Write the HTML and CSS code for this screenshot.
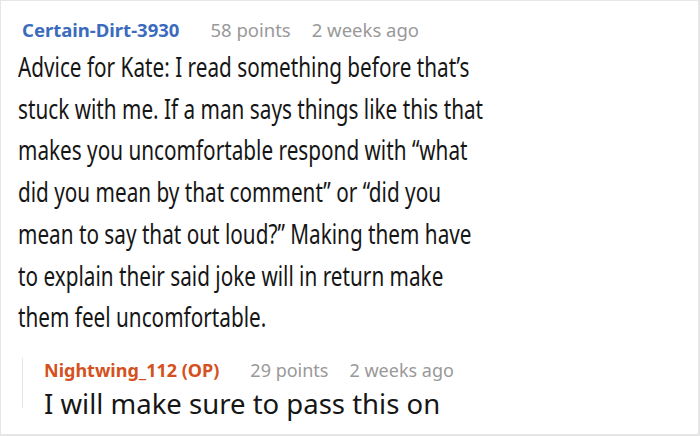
FILE: index.html
```html
<!DOCTYPE html>
<html>
<head>
<meta charset="utf-8">
<link rel="stylesheet" href="styles.css">
</head>
<body>
<div class="frame">
  <div class="comment">
    <div class="meta">
      <span class="author">Certain-Dirt-3930</span>
      <span class="points">58 points</span>
      <span class="time">2 weeks ago</span>
    </div>
    <p class="body">Advice for Kate: I read something before that’s stuck with me. If a man says things like this that makes you uncomfortable respond with “what did you mean by that comment” or “did you mean to say that out loud?” Making them have to explain their said joke will in return make them feel uncomfortable.</p>
    <div class="reply">
      <div class="meta reply-meta">
        <span class="author op">Nightwing_112 (OP)</span>
        <span class="points">29 points</span>
        <span class="time">2 weeks ago</span>
      </div>
      <p class="reply-body">I will make sure to pass this on</p>
    </div>
  </div>
</div>
</body>
</html>
```
FILE: styles.css
```css
html, body {
  margin: 0;
  padding: 0;
  background: #ffffff;
}
.frame {
  width: 700px;
  height: 436px;
  box-sizing: border-box;
  border-top: 1px solid #e6e6e6;
  border-left: 1px solid #e6e6e6;
  border-right: 2px solid #e6e6e6;
  border-bottom: 2px solid #e6e6e6;
  overflow: hidden;
  font-family: "Noto Sans", sans-serif;
}
.comment {
  padding: 14px 0 0 21px;
}
.meta {
  display: flex;
  align-items: baseline;
  font-size: 18.5px;
  line-height: 30px;
  white-space: nowrap;
}
.author {
  font-weight: bold;
  color: #3b6bbd;
  margin-right: 31px;
}
.author.op {
  color: #d4511e;
}
.points, .time {
  color: #999999;
}
.points {
  margin-right: 21px;
}
.body {
  margin: 1px 0 0 -4px;
  font-size: 27px;
  line-height: 41.7px;
  color: #161616;
  width: 620px;
  transform: scaleX(0.768);
  transform-origin: left top;
}
.reply {
  margin-top: 30px;
  height: 50px;
  padding-left: 21px;
  border-left: 1px solid #e6e6e6;
}
.reply-meta {
  margin-top: -10px;
  font-size: 18px;
  line-height: 24px;
}
.reply-body {
  margin: 0;
  font-size: 27.5px;
  line-height: 44.7px;
  color: #161616;
  white-space: nowrap;
}
```
